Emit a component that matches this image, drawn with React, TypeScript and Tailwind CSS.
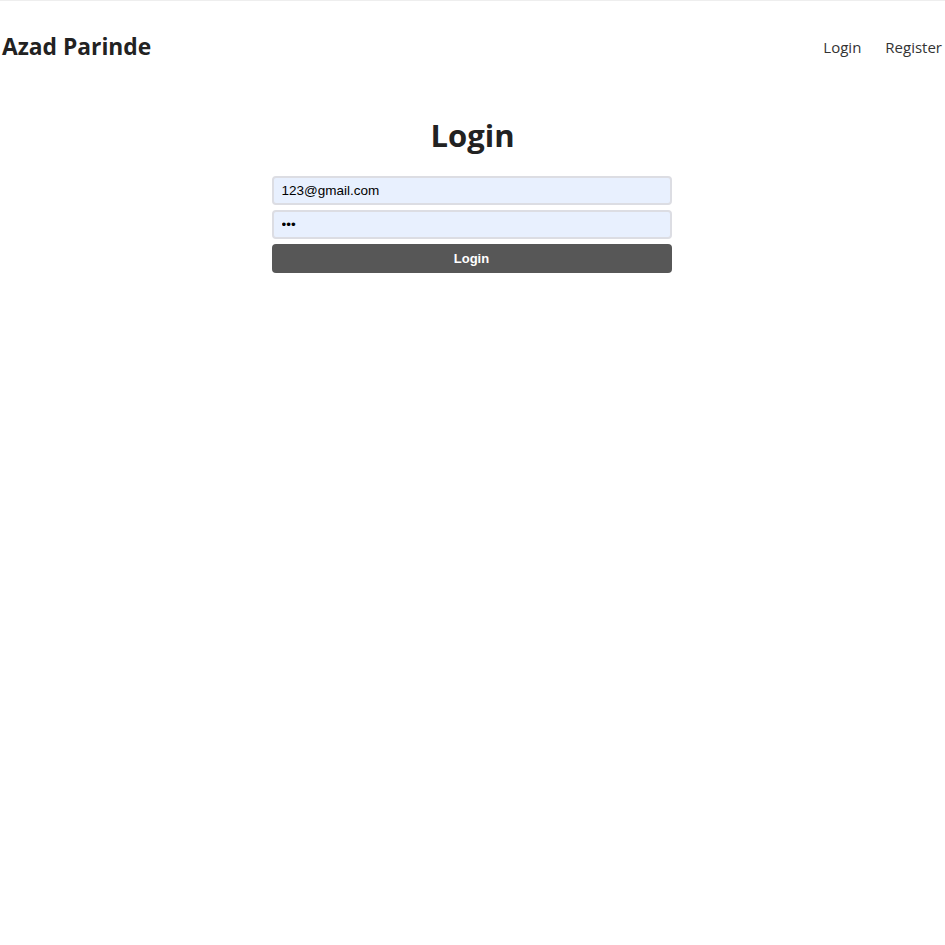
export default function App() {
  return (
    <div className="min-h-screen bg-white border-t border-[#eeeeee] text-[#222] font-['Open_Sans','Noto_Sans',sans-serif]">
      <header className="flex items-center justify-between pl-[2px] pr-[3px] pt-[30px] pb-[10px]">
        <h1 className="text-[22.8px] font-bold leading-[32px]">Azad Parinde</h1>
        <nav className="flex gap-6 text-[15px] leading-[32px] text-[#333]">
          <a href="#">Login</a>
          <a href="#">Register</a>
        </nav>
      </header>

      <main className="flex flex-col items-center pt-[42px]">
        <h2 className="text-[31px] font-bold leading-[40px] mb-[21px]">Login</h2>
        <form className="w-[400px] -ml-[2px] flex flex-col gap-[5px] font-['Liberation_Sans',Arial,sans-serif]">
          <input
            type="email"
            defaultValue="123@gmail.com"
            className="h-[29px] px-[8px] text-[13.5px] text-black bg-[#e8f0fe] border-2 border-[#dcdde3] rounded-[4px] outline-none"
          />
          <input
            type="password"
            defaultValue="123"
            className="h-[29px] px-[8px] text-[13.5px] text-black bg-[#e8f0fe] border-2 border-[#dcdde3] rounded-[4px] outline-none"
          />
          <button
            type="button"
            className="h-[29px] text-[13px] font-bold text-white bg-[#575757] rounded-[4px]"
          >
            Login
          </button>
        </form>
      </main>
    </div>
  );
}
